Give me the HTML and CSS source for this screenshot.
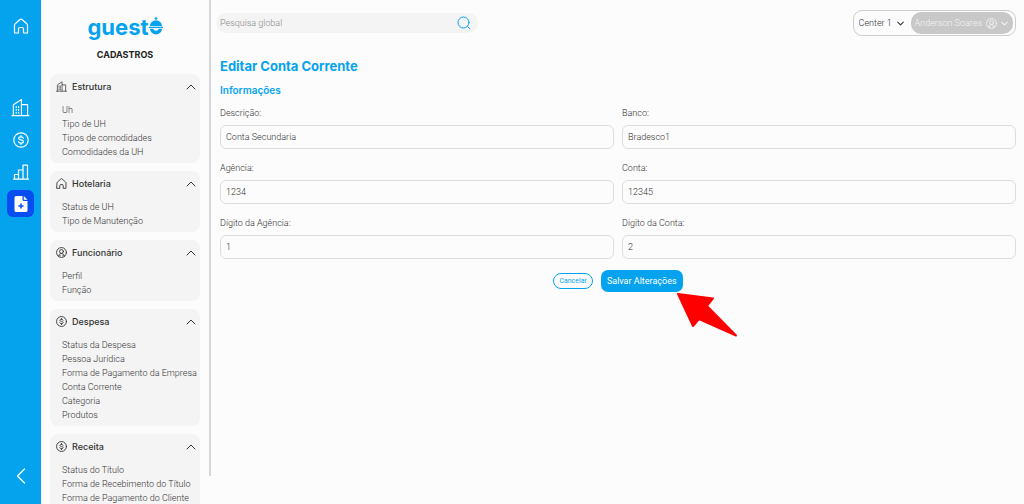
FILE: index.html
```html
<!DOCTYPE html>
<html lang="pt-BR">
<head>
    <meta charset="UTF-8">
    <meta name="viewport" content="width=device-width, initial-scale=1.0">
    <title>Editar Conta Corrente</title>
    <link rel="stylesheet" href="styles.css">
</head>
<body>
    <!-- Shared icons -->
    <svg class="sprite" aria-hidden="true">
        <symbol id="home" viewBox="0 0 16 16">
            <path d="M1.500 7a2 2 0 0 1 .7-1.200L7 1.500a1.500 1.500 0 0 1 2 0l4.800 4.300a2 2 0 0 1 .7 1.200v8h-4v-4a1.500 1.500 0 0 0-1.500-1.500H7A1.500 1.500 0 0 0 5.500 11v4h-4z"/>
        </symbol>
        <symbol id="building" viewBox="0 0 20 20">
            <path d="M1 18.500h18M2.500 18.500V7L11 1.500v17M11 7h6.500v11.500"/>
            <path d="M5.500 9v1M8 9v1M5.500 12v1M8 12v1M5.500 15v1M8 15v1"/>
        </symbol>
        <symbol id="money" viewBox="0 0 16 16">
            <circle cx="8" cy="8" r="7.200"/>
            <path d="M10.300 6.200C10 5.300 9.200 4.900 8 4.900c-1.400 0-2.300.6-2.300 1.500 0 2.300 4.700.8 4.700 3.200 0 1-1 1.600-2.400 1.600-1.300 0-2.200-.5-2.500-1.500M8 3.600v1.300M8 11.200v1.300"/>
        </symbol>
        <symbol id="person" viewBox="0 0 16 16">
            <circle cx="8" cy="8" r="7.200"/>
            <circle cx="8" cy="6.500" r="2.800"/>
            <path d="M3.800 13.500c0-2.200 1.500-4 4.200-4s4.200 1.800 4.200 4M5.800 13v-1M10.200 13v-1"/>
        </symbol>
        <symbol id="up" viewBox="0 0 10 6">
            <path d="M1 5l4-4 4 4"/>
        </symbol>
        <symbol id="down" viewBox="0 0 10 6">
            <path d="M1 1l4 4 4-4"/>
        </symbol>
    </svg>

    <div class="layout">
        <nav class="rail">
            <a href="#" class="rail-link rail-home" aria-label="Início"><svg class="icon-md"><use href="#home"/></svg></a>
            <a href="#" class="rail-link" aria-label="Estrutura"><svg class="icon-lg"><use href="#building"/></svg></a>
            <a href="#" class="rail-link" aria-label="Financeiro"><svg class="icon-md"><use href="#money"/></svg></a>
            <a href="#" class="rail-link" aria-label="Relatórios">
                <svg class="icon-md" viewBox="0 0 16 16"><path d="M.5 15.200h15M1.500 15v-4.500h4M5.500 15V6h4.500M10 15V1.200h4.500V15"/></svg>
            </a>
            <a href="#" class="rail-link active" aria-label="Cadastros">
                <svg class="icon-md" viewBox="0 0 16 16">
                    <path class="sheet" d="M3 0h6.500v3.500a1.500 1.500 0 0 0 1.500 1.500h3.500v9.500a1.500 1.500 0 0 1-1.500 1.500H3a1.500 1.500 0 0 1-1.500-1.500v-13A1.500 1.500 0 0 1 3 0zM10.800 0l3.700 3.800h-3.700z"/>
                    <path class="plus" d="M8 8v4M6 10h4"/>
                </svg>
            </a>
            <button class="rail-back" type="button" aria-label="Recolher">
                <svg viewBox="0 0 10 16"><path d="M8.500 1 1.500 8l7 7"/></svg>
            </button>
        </nav>

        <aside class="sidebar">
            <div class="logo">
                <span>guest</span>
                <svg viewBox="0 0 14 18">
                    <circle cx="7" cy="1.500" r="1.300"/>
                    <path d="M1 9a6 5.800 0 0 1 12 0zM0 9.800h14v1.200H0zM1 11.800h3.200a2.900 2.600 0 0 0 5.600 0H13a6 5.600 0 0 1-12 0z"/>
                </svg>
            </div>
            <h2 class="sidebar-title">CADASTROS</h2>

            <details class="card" open>
                <summary><svg class="icon-sm"><use href="#building"/></svg>Estrutura<svg class="arrow"><use href="#up"/></svg></summary>
                <ul>
                    <li><a href="#">Uh</a></li>
                    <li><a href="#">Tipo de UH</a></li>
                    <li><a href="#">Tipos de comodidades</a></li>
                    <li><a href="#">Comodidades da UH</a></li>
                </ul>
            </details>
            <details class="card" open>
                <summary><svg class="icon-sm"><use href="#home"/></svg>Hotelaria<svg class="arrow"><use href="#up"/></svg></summary>
                <ul>
                    <li><a href="#">Status de UH</a></li>
                    <li><a href="#">Tipo de Manutenção</a></li>
                </ul>
            </details>
            <details class="card" open>
                <summary><svg class="icon-sm"><use href="#person"/></svg>Funcionário<svg class="arrow"><use href="#up"/></svg></summary>
                <ul>
                    <li><a href="#">Perfil</a></li>
                    <li><a href="#">Função</a></li>
                </ul>
            </details>
            <details class="card" open>
                <summary><svg class="icon-sm"><use href="#money"/></svg>Despesa<svg class="arrow"><use href="#up"/></svg></summary>
                <ul>
                    <li><a href="#">Status da Despesa</a></li>
                    <li><a href="#">Pessoa Jurídica</a></li>
                    <li><a href="#">Forma de Pagamento da Empresa</a></li>
                    <li><a href="#">Conta Corrente</a></li>
                    <li><a href="#">Categoria</a></li>
                    <li><a href="#">Produtos</a></li>
                </ul>
            </details>
            <details class="card" open>
                <summary><svg class="icon-sm"><use href="#money"/></svg>Receita<svg class="arrow"><use href="#up"/></svg></summary>
                <ul>
                    <li><a href="#">Status do Título</a></li>
                    <li><a href="#">Forma de Recebimento do Título</a></li>
                    <li><a href="#">Forma de Pagamento do Cliente</a></li>
                </ul>
            </details>
        </aside>
        <div class="divider"></div>

        <main class="content">
            <header class="topbar">
                <form class="search" role="search">
                    <input type="search" placeholder="Pesquisa global" aria-label="Pesquisa global">
                    <button type="submit" aria-label="Pesquisar">
                        <svg viewBox="0 0 14 14"><circle cx="6.500" cy="6.500" r="5.500"/><path d="M10.500 10.500 13 13"/></svg>
                    </button>
                </form>
                <div class="account">
                    <div class="center-select">
                        <select aria-label="Center">
                            <option>Center 1</option>
                        </select>
                        <svg class="caret"><use href="#down"/></svg>
                    </div>
                    <button class="user" type="button">Anderson Soares
                        <svg class="icon-sm"><use href="#person"/></svg>
                        <svg class="caret"><use href="#down"/></svg>
                    </button>
                </div>
            </header>

            <form class="edit-form">
                <h1>Editar Conta Corrente</h1>
                <h3>Informações</h3>
                <div class="fields">
                    <div class="field">
                        <label for="descricao">Descrição:</label>
                        <input type="text" id="descricao" value="Conta Secundaria">
                    </div>
                    <div class="field">
                        <label for="banco">Banco:</label>
                        <input type="text" id="banco" value="Bradesco1">
                    </div>
                    <div class="field">
                        <label for="agencia">Agência:</label>
                        <input type="text" id="agencia" value="1234">
                    </div>
                    <div class="field">
                        <label for="conta">Conta:</label>
                        <input type="text" id="conta" value="12345">
                    </div>
                    <div class="field">
                        <label for="digito-agencia">Dígito da Agência:</label>
                        <input type="text" id="digito-agencia" value="1">
                    </div>
                    <div class="field">
                        <label for="digito-conta">Digito da Conta:</label>
                        <input type="text" id="digito-conta" value="2">
                    </div>
                </div>
                <div class="actions">
                    <button type="button" class="cancel-btn">Cancelar</button>
                    <div class="save">
                        <button type="submit" class="save-btn">Salvar Alterações</button>
                        <svg class="pointer" viewBox="0 0 62 46"><path d="M2 2 37 6.500 31 14 60 43.500 23 27 17 34z"/></svg>
                    </div>
                </div>
            </form>
        </main>
    </div>
</body>
</html>
```
FILE: styles.css
```css
* {
    box-sizing: border-box;
}
body {
    margin: 0;
    font-family: Roboto, sans-serif;
    font-size: 9px;
    font-weight: 300;
    line-height: 14px;
    color: #333;
    background-color: #fcfcfc;
}
input, select, button {
    font: inherit;
    color: inherit;
}
button {
    cursor: pointer;
}
a {
    color: inherit;
    text-decoration: none;
}
svg {
    display: block;
    flex: none;
    fill: none;
    stroke: currentColor;
    stroke-linejoin: round;
    stroke-linecap: round;
}
.sprite {
    display: none;
}
.icon-sm {
    width: 11px;
    height: 11px;
    stroke-width: 1.3;
}
.icon-md {
    width: 16px;
    height: 16px;
    stroke-width: 1.2;
}
.icon-lg {
    width: 19px;
    height: 19px;
    stroke-width: 1.2;
}
.layout {
    display: flex;
    height: 100vh;
}

/* Blue rail */
.rail {
    display: flex;
    flex-direction: column;
    align-items: center;
    gap: 5px;
    width: 41px;
    padding: 12px 0 14px;
    color: white;
    background-color: #05a3ee;
}
.rail-link {
    display: flex;
    align-items: center;
    justify-content: center;
    width: 27px;
    height: 27px;
    border-radius: 6px;
}
.rail-home {
    margin-bottom: 50px;
}
.rail-link.active {
    background-color: #084df0;
}
.sheet {
    fill: white;
    stroke: none;
}
.plus {
    stroke: #084df0;
    stroke-width: 1.5;
}
.rail-back {
    margin-top: auto;
    padding: 6px;
    border: none;
    color: inherit;
    background: none;
}
.rail-back svg {
    width: 10px;
    height: 16px;
    stroke-width: 1.3;
}

/* Sidebar */
.sidebar {
    width: 168px;
    padding: 13px 9px 0;
    overflow: hidden;
}
.divider {
    width: 2px;
    margin-bottom: 28px;
    background-color: #d5d5da;
}
.logo {
    display: flex;
    justify-content: center;
    height: 28px;
    font-family: Inter, sans-serif;
    font-size: 22px;
    font-weight: 700;
    line-height: 28px;
    color: #05a3ee;
}
.logo svg {
    width: 14px;
    height: 18px;
    margin-top: 4px;
    fill: currentColor;
    stroke: none;
}
.sidebar-title {
    margin: 7px 0 12px;
    font-family: Inter, sans-serif;
    font-size: 9px;
    font-weight: 700;
    line-height: 14px;
    text-align: center;
    color: #222;
}
.card {
    margin-bottom: 8px;
    padding-bottom: 4px;
    border-radius: 8px;
    background-color: #f4f4f4;
}
.card summary {
    display: flex;
    align-items: center;
    gap: 5px;
    height: 25px;
    padding: 0 4px 0 6px;
    font-family: Inter, sans-serif;
    font-weight: 500;
    list-style: none;
    cursor: pointer;
}
.card .arrow {
    width: 10px;
    height: 6px;
    margin-left: auto;
}
.card ul {
    margin: 0;
    padding: 4px 0 0 12px;
    list-style: none;
    white-space: nowrap;
}

/* Content */
.content {
    flex: 1;
    min-width: 0;
}
.topbar {
    display: flex;
    align-items: center;
    justify-content: space-between;
    padding: 10px 8px 0 5px;
}
.search {
    display: flex;
    align-items: center;
    width: 262px;
    height: 20px;
    padding: 0 7px 0 4px;
    border-radius: 10px;
    background-color: #f4f4f4;
}
.search input {
    flex: 1;
    min-width: 0;
    padding: 0;
    border: none;
    outline: none;
    background: none;
}
.search input::placeholder {
    color: #888;
}
.search button {
    padding: 0;
    border: none;
    color: #05a3ee;
    background: none;
}
.search svg {
    width: 14px;
    height: 14px;
}
.account {
    display: flex;
    align-items: center;
    gap: 7px;
    padding: 1px 2px 1px 5px;
    border: 1px solid #ccc;
    border-radius: 9px;
}
.center-select {
    display: flex;
    align-items: center;
    gap: 4px;
}
.center-select select {
    padding: 0;
    border: none;
    appearance: none;
    background: none;
}
.caret {
    width: 7px;
    height: 5px;
    stroke-width: 1.5;
}
.user {
    display: flex;
    align-items: center;
    gap: 4px;
    height: 22px;
    padding: 0 5px 0 4px;
    border: none;
    border-radius: 10px;
    color: #f4f4f4;
    background-color: #c8c8c8;
}

/* Form */
.edit-form {
    padding: 21px 8px 0 9px;
}
h1 {
    margin: 0;
    font-family: Inter, sans-serif;
    font-size: 13px;
    font-weight: 700;
    line-height: 18px;
    color: #05a3ee;
}
h3 {
    margin: 8px 0 9px;
    font-family: Inter, sans-serif;
    font-size: 10px;
    font-weight: 600;
    line-height: 14px;
    color: #05a3ee;
}
.fields {
    display: grid;
    grid-template-columns: 1fr 1fr;
    gap: 12px 8px;
}
.field label {
    display: block;
    margin-bottom: 5px;
}
.field input {
    display: block;
    width: 100%;
    height: 24px;
    padding: 0 5px;
    border: 1px solid #ddd;
    border-radius: 6px;
    outline: none;
    background: none;
}
.actions {
    display: flex;
    align-items: center;
    justify-content: center;
    gap: 8px;
    margin-top: 11px;
}
.cancel-btn {
    height: 16px;
    padding: 0 5px;
    border: 1px solid #05a3ee;
    border-radius: 8px;
    font-size: 7px;
    font-weight: 400;
    line-height: 14px;
    color: #05a3ee;
    background: none;
}
.save {
    position: relative;
}
.save-btn {
    display: block;
    height: 22px;
    padding: 0 6px;
    border: none;
    border-radius: 7px;
    font-weight: 400;
    color: white;
    background-color: #05a3ee;
}
.pointer {
    position: absolute;
    top: 22px;
    left: 75px;
    width: 62px;
    height: 46px;
    fill: #ff0000;
    stroke: #ff0000;
    stroke-width: 2;
}
```
